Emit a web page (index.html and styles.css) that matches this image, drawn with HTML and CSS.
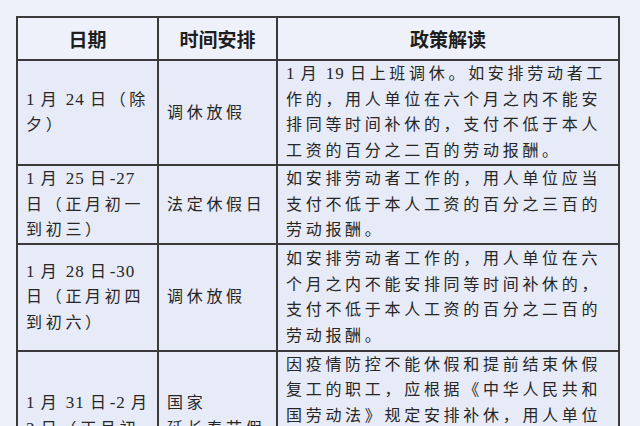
FILE: index.html
```html
<!DOCTYPE html>
<html lang="zh-CN">
<head>
<meta charset="utf-8">
<title>春节假期安排</title>
<link rel="stylesheet" href="styles.css">
</head>
<body>
<div class="page">
  <table class="policy">
    <colgroup>
      <col class="c-date">
      <col class="c-plan">
      <col class="c-text">
    </colgroup>
    <thead>
      <tr>
        <th>日期</th>
        <th>时间安排</th>
        <th>政策解读</th>
      </tr>
    </thead>
    <tbody>
      <tr>
        <td class="date"><span class="n">1 </span>月<span class="n"> 24 </span>日（除<br>夕）</td>
        <td class="plan">调休放假</td>
        <td class="text"><span class="n">1 </span>月<span class="n"> 19 </span>日上班调休。如安排劳动者工<br>作的，用人单位在六个月之内不能安<br>排同等时间补休的，支付不低于本人<br>工资的百分之二百的劳动报酬。</td>
      </tr>
      <tr>
        <td class="date"><span class="n">1 </span>月<span class="n"> 25 </span>日<span class="n">-27</span><br>日（正月初一<br>到初三）</td>
        <td class="plan">法定休假日</td>
        <td class="text">如安排劳动者工作的，用人单位应当<br>支付不低于本人工资的百分之三百的<br>劳动报酬。</td>
      </tr>
      <tr class="tall">
        <td class="date"><span class="n">1 </span>月<span class="n"> 28 </span>日<span class="n">-30</span><br>日（正月初四<br>到初六）</td>
        <td class="plan">调休放假</td>
        <td class="text">如安排劳动者工作的，用人单位在六<br>个月之内不能安排同等时间补休的，<br>支付不低于本人工资的百分之二百的<br>劳动报酬。</td>
      </tr>
      <tr>
        <td class="date"><span class="n">1 </span>月<span class="n"> 31 </span>日<span class="n">-2 </span>月<br><span class="n">2 </span>日（正月初<br>七到初九）</td>
        <td class="plan">国家<br>延长春节假<br>期</td>
        <td class="text">因疫情防控不能休假和提前结束休假<br>复工的职工，应根据《中华人民共和<br>国劳动法》规定安排补休，用人单位<br>不能安排补休的，应当按照不低于本<br>人工资的百分之二百支付劳动者工资<br>报酬。</td>
      </tr>
    </tbody>
  </table>
</div>
</body>
</html>
```

FILE: styles.css
```css
html, body {
  margin: 0;
  padding: 0;
  background: #edf0f9;
  overflow: hidden;
}

.page {
  padding: 16px 0 0 16px;
  width: 640px;
  height: 426px;
  box-sizing: border-box;
}

.policy {
  border-collapse: collapse;
  table-layout: fixed;
  width: 602px;
  color: #262626;
  font-family: "Liberation Serif", "Noto Sans CJK SC", serif;
  font-size: 16px;
  line-height: 25.7px;
}

.c-date { width: 141px; }
.c-plan { width: 119px; }
.c-text { width: 342px; }

.policy th,
.policy td {
  border: 2px solid #3a3a3a;
  background: #e7ebf7;
  vertical-align: middle;
  white-space: nowrap;
  overflow: hidden;
}

.policy th {
  height: 41px;
  padding: 0;
  background: #eff1fa;
  font-family: "Noto Sans CJK SC", sans-serif;
  font-weight: 700;
  font-size: 19px;
  color: #1e1e1e;
  text-align: center;
}

.policy td {
  padding: 0 4px 0 8px;
  letter-spacing: 3.7px;
  text-align: left;
}

.policy .tall td {
  padding-top: 1px;
  padding-bottom: 1px;
}

.n {
  font-size: 17px;
  letter-spacing: 1px;
}
```
